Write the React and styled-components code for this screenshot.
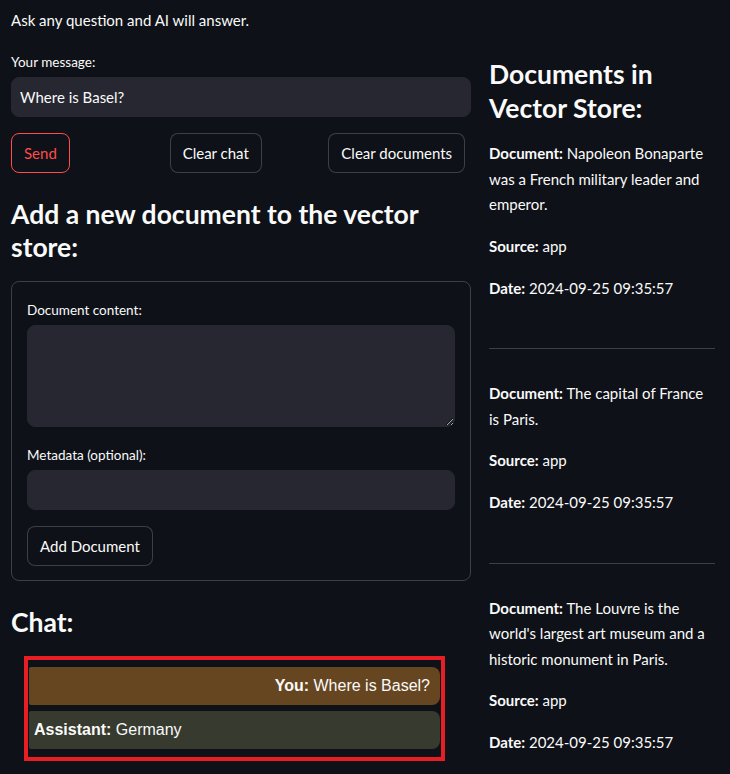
import React from "react";
import styled, { createGlobalStyle } from "styled-components";

const Global = createGlobalStyle`
  html, body { margin: 0; padding: 0; background: #0e1117; }
  body {
    font-family: Lato, "Open Sans", sans-serif;
    color: #fafafa;
    -webkit-font-smoothing: antialiased;
  }
  * { box-sizing: border-box; }
`;

const Page = styled.div`
  display: grid;
  grid-template-columns: 460px 226px;
  column-gap: 18px;
  align-items: start;
  padding: 8px 15px 0 11px;
  width: 730px;
  height: 774px;
  overflow: hidden;
`;

const Column = styled.div`
  display: flex;
  flex-direction: column;
  gap: 16px;
  padding-top: ${(p) => p.$top || 0}px;
`;

const Text = styled.p`
  margin: 0;
  font-size: 15px;
  line-height: 25.6px;
`;

const Heading = styled.h3`
  margin: 0;
  padding: 9px 0 0;
  font-size: 26.5px;
  line-height: 33.6px;
  font-weight: 700;
`;

const Field = styled.div`
  display: flex;
  flex-direction: column;
`;

const Label = styled.label`
  font-size: 13.5px;
  line-height: 24px;
  min-height: 24px;
  margin-bottom: 3px;
  display: flex;
  align-items: center;
`;

const Input = styled.input`
  height: 40px;
  width: 100%;
  background: #262730;
  border: 1px solid #262730;
  border-radius: 8px;
  color: #fafafa;
  font-family: inherit;
  font-size: 15px;
  padding: 0 8px;
  outline: none;
`;

const TextArea = styled.textarea`
  height: 102px;
  width: 100%;
  background: #262730;
  border: 1px solid #262730;
  border-radius: 8px;
  color: #fafafa;
  font-family: inherit;
  font-size: 15px;
  padding: 8px;
  outline: none;
  resize: vertical;
  color-scheme: dark;
  display: block;
`;

const ButtonRow = styled.div`
  display: grid;
  grid-template-columns: repeat(3, 1fr);
  gap: 16px;
`;

const Button = styled.button`
  justify-self: start;
  align-self: flex-start;
  height: 40px;
  padding: 0 12px;
  white-space: nowrap;
  background: #0e1117;
  border: 1px solid ${(p) => (p.$primary ? "#ff4b4b" : "rgba(250,250,250,0.2)")};
  color: ${(p) => (p.$primary ? "#ff4b4b" : "#fafafa")};
  border-radius: 8px;
  font-family: inherit;
  font-size: 15px;
  cursor: pointer;
`;

const Form = styled.div`
  border: 1px solid rgba(250, 250, 250, 0.2);
  border-radius: 8px;
  padding: 16px 15px 14px;
  display: flex;
  flex-direction: column;
  gap: 16px;
`;

const ChatBox = styled.div`
  margin: 1px 0 0 13px;
  width: 421px;
  border: 4px solid #e81e25;
  padding: 7px 1px 8px;
  display: flex;
  flex-direction: column;
  gap: 6px;
`;

const Message = styled.div`
  background: ${(p) => (p.$user ? "#664620" : "#373a2f")};
  border-radius: 2px 8px 8px 2px;
  padding: 10px ${(p) => (p.$user ? "10px" : "5px")};
  text-align: ${(p) => (p.$user ? "right" : "left")};
  font-family: "Liberation Sans", Arial, sans-serif;
  font-size: 16px;
  line-height: 18px;
  color: #fafafa;
`;

const Rule = styled.hr`
  border: none;
  border-top: 1px solid rgba(250, 250, 250, 0.2);
  margin: 31px 0 16px;
`;

const docs = [
  "Napoleon Bonaparte was a French military leader and emperor.",
  "The capital of France is Paris.",
  "The Louvre is the world's largest art museum and a historic monument in Paris.",
];

export default function App() {
  return (
    <>
      <Global />
      <Page>
        <Column>
          <Text>Ask any question and AI will answer.</Text>
          <Field>
            <Label>Your message:</Label>
            <Input defaultValue="Where is Basel?" />
          </Field>
          <ButtonRow>
            <Button $primary>Send</Button>
            <Button>Clear chat</Button>
            <Button>Clear documents</Button>
          </ButtonRow>
          <Heading>Add a new document to the vector store:</Heading>
          <Form>
            <Field>
              <Label>Document content:</Label>
              <TextArea />
            </Field>
            <Field>
              <Label>Metadata (optional):</Label>
              <Input />
            </Field>
            <Button>Add Document</Button>
          </Form>
          <Heading>Chat:</Heading>
          <ChatBox>
            <Message $user>
              <b>You:</b> Where is Basel?
            </Message>
            <Message>
              <b>Assistant:</b> Germany
            </Message>
          </ChatBox>
        </Column>
        <Column $top={41}>
          <Heading>Documents in Vector Store:</Heading>
          {docs.map((d, i) => (
            <React.Fragment key={i}>
              {i > 0 && <Rule />}
              <Text>
                <b>Document:</b> {d}
              </Text>
              <Text>
                <b>Source:</b> app
              </Text>
              <Text>
                <b>Date:</b> 2024-09-25 09:35:57
              </Text>
            </React.Fragment>
          ))}
        </Column>
      </Page>
    </>
  );
}
